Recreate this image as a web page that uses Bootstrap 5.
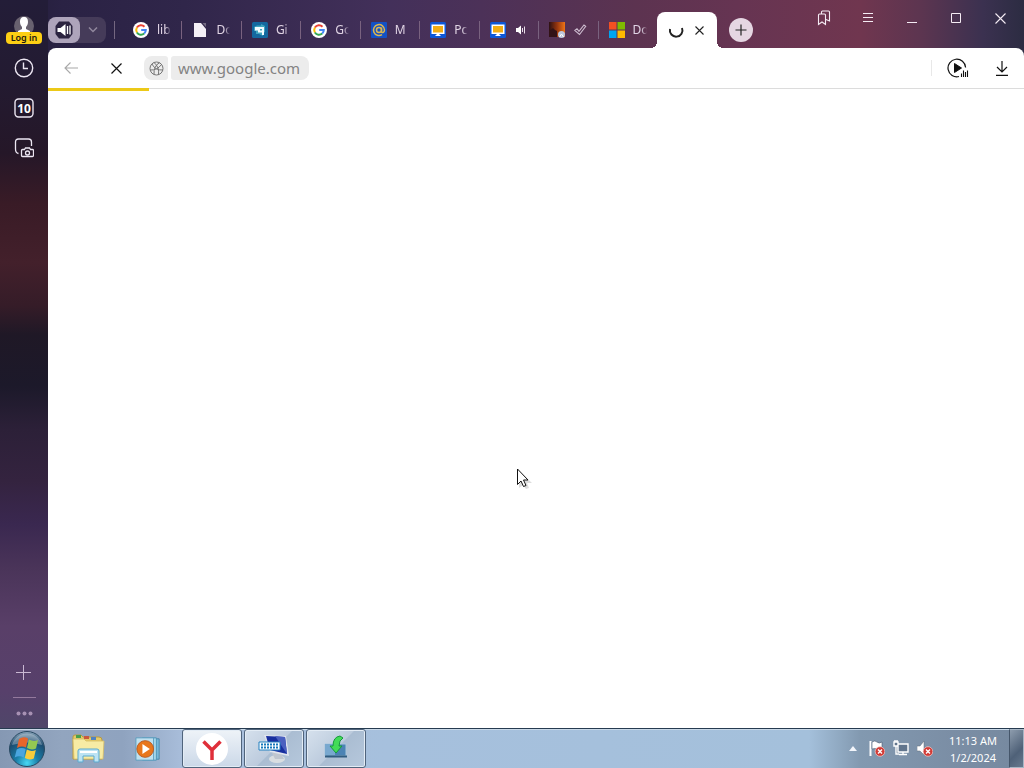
<!DOCTYPE html>
<html lang="en">
<head>
<meta charset="utf-8">
<meta name="viewport" content="width=device-width, initial-scale=1">
<title>www.google.com</title>
<link href="https://cdn.jsdelivr.net/npm/bootstrap@5.3.0/dist/css/bootstrap.min.css" rel="stylesheet">
<style>
  body { font-family: "Noto Sans", "Open Sans", sans-serif; font-size: 12px; line-height: 16px; background: #231c35; }
  svg { display: block; flex: none; }
  button { border: 0; padding: 0; background: none; color: inherit; display: flex; align-items: center; justify-content: center; }
  .browser { background: linear-gradient(90deg, #221c36 0, #2a2244 6%, #30264a 18%, #43305a 38%, #4c3158 47%, #5c3350 62%, #663452 72%, #70364f 84%, #5c3550 90%, #3b3150 96%, #2c2c42 100%); }
  .sidebar { width: 48px; color: #ece6f2; background: linear-gradient(180deg, #231d38 0, #231b32 10%, #251728 21%, #391b26 28%, #43202b 36%, #351c28 42%, #1f1826 46%, #1c192a 53%, #2c2038 59%, #34233f 66%, #3a2850 72%, #4a3459 78%, #593f68 86%, #57406b 95%, #4f4669 100%); }
  .sidebar button { width: 48px; height: 40px; }
  .avatar-btn { padding-top: 14px; }
  .login-tag { background: #fdcf14; color: #1c1a10; font-size: 9px; font-weight: 600; line-height: 12px; height: 12px; border-radius: 4px; width: 36px; margin-top: -4px; position: relative; }
  .side-foot { color: #a791b3; }
  .side-foot .rule { width: 23px; height: 1px; background: #94799d; }
  .side-foot .dots { height: 30px; }
  .strip { height: 48px; }
  .audio { width: 58px; height: 26px; margin-top: 17px; background: #453b59; border-radius: 8px; }
  .audio .on { width: 32px; height: 26px; background: #aea4bb; border-radius: 8px; }
  .audio .more { width: 26px; height: 26px; }
  .tick { width: 1px; height: 18px; background: #746780; margin-top: 21px; }
  .tabset { width: 535px; margin-left: 7px; padding-top: 12px; }
  .tab { flex: 1 1 0; min-width: 0; height: 36px; padding-left: 11px; color: #e0d4e4; position: relative; justify-content: flex-start; }
  .tab + .tab::before { content: ""; position: absolute; left: 0; top: 9px; width: 1px; height: 18px; background: #79627f; }
  .tab .cap { margin-left: 8px; width: 14px; overflow: hidden; white-space: nowrap; text-align: left; -webkit-mask-image: linear-gradient(90deg, #000 60%, transparent); mask-image: linear-gradient(90deg, #000 60%, transparent); }
  .tab svg + svg { margin-left: 9px; }
  .active-tab { width: 60px; height: 36px; margin-top: 12px; background: #fff; border-radius: 8px 8px 0 0; position: relative; color: #222; }
  .active-tab::before, .active-tab::after { content: ""; position: absolute; bottom: 0; width: 6px; height: 6px; }
  .active-tab::before { right: 100%; background: radial-gradient(circle at 0 0, transparent 6px, #fff 6px); }
  .active-tab::after { left: 100%; background: radial-gradient(circle at 100% 0, transparent 6px, #fff 6px); }
  .new-tab { width: 24px; height: 24px; border-radius: 50%; background: #e5d6e2; color: #222; margin: 18px 0 0 12px; }
  .win-tools { padding-right: 2px; color: #f5ecf4; }
  .win-tools button { width: 44px; height: 36px; }
  .page { background: #fff; border-radius: 8px 8px 0 0; }
  .toolbar { height: 41px; border-bottom: 1px solid #dcdcdc; position: relative; color: #111; }
  .tool { width: 44px; height: 40px; }
  .tool.back { width: 46px; color: #a8a8a8; }
  .site-info { width: 24px; height: 24px; background: #ececec; border-radius: 8px 3px 3px 8px; color: #777; margin-left: 6px; }
  .address { width: 138px; height: 24px; border: 0; border-radius: 3px 8px 8px 3px; background: #ececec; padding: 0 7px; margin-left: 3px; font-size: 15px; line-height: 24px; color: #838383; outline: 0; }
  .vline { width: 1px; height: 16px; background: #e8e8e8; }
  .loading { position: absolute; left: 0; top: 40px; width: 101px; height: 3px; background: #ecc918; }
  .pointer { position: absolute; left: 51%; top: 468px; margin-left: -6px; }
  .taskbar { height: 40px; border-top: 1px solid #263b50; box-shadow: inset 0 1px #c9d9e8; background: linear-gradient(90deg, #8598b3 0, #92a5bf 6%, #8fa3bf 12%, #a9bedb 18%, #a6c0dd 38%, #a4c0db 79%, #8299b0 84%, #7b8ea5 93%, #76899f 100%); }
  .start { width: 54px; }
  .pin { width: 60px; }
  .tasks { gap: 2px; margin-left: 4px; }
  .task { width: 60px; height: 39px; border: 1px solid #50647c; border-radius: 3px; box-shadow: inset 0 0 0 1px #e3ecf5; background: linear-gradient(135deg, #d6e1ed 0, #bccbdd 50%, #aabdd2 51%, #b6c8dc 100%); }
  .task.current { background: linear-gradient(180deg, #eef3f8, #cbd8e8); }
  .tray { margin-left: 12px; margin-right: 4px; }
  .time { width: 72px; color: #fff; font-size: 11px; line-height: 17px; }
  .show-desk { width: 15px; height: 39px; border: 1px solid #a7b6c5; border-left-color: #45566a; background: linear-gradient(135deg, #8d9cad, #4f6178 60%, #67798e); }
</style>
</head>
<body>
<div class="d-flex flex-column vh-100 overflow-hidden">
  <div class="browser d-flex flex-grow-1">
    <aside class="sidebar d-flex flex-column flex-shrink-0" aria-label="Side panel">
      <a href="#" class="avatar-btn d-flex flex-column align-items-center text-decoration-none">
        <svg width="20" height="22" viewBox="0 0 20 22"><circle cx="10" cy="12" r="10" fill="#68616f"/><path d="M10 3c3 0 4 2 4 5 0 2-1 4-2 5v2l4 2v3H4v-3l4-2v-2c-1-1-2-3-2-5 0-3 1-5 4-5z" fill="#fff"/></svg>
        <span class="login-tag text-center">Log in</span>
      </a>
      <button class="mt-1" aria-label="History"><svg width="20" height="20" viewBox="0 0 20 20" fill="none" stroke="currentColor" stroke-width="1.4"><circle cx="10" cy="10" r="8.7"/><path d="M9.500 4.500V10.500H14"/></svg></button>
      <button aria-label="Open tabs"><svg width="20" height="20" viewBox="0 0 20 20"><rect x="1" y="1" width="18" height="18" rx="3.500" fill="none" stroke="currentColor" stroke-width="1.400"/><text x="10" y="14.500" text-anchor="middle" font-family="Noto Sans" font-size="12" font-weight="700" fill="#fff">10</text></svg></button>
      <button aria-label="Screenshot"><svg width="20" height="20" viewBox="0 0 20 20" fill="none" stroke="currentColor" stroke-width="1.300"><path d="M4.500 15.500C2 15 1.500 13 1.500 11V4Q1.500 1 4.500 1h10q3 0 3 3v4"/><path d="M8.500 11.500h2l1-1.500h4l1 1.500h2q1 0 1 1v5q0 1-1 1h-10q-1 0-1-1v-5q0-1 1-1z"/><circle cx="13.500" cy="15" r="2"/></svg></button>
      <div class="side-foot mt-auto d-flex flex-column align-items-center">
        <button aria-label="Add"><svg width="16" height="16" viewBox="0 0 16 16" stroke="#c9b8d2"><path d="M7.500 0v15M0 7.500h15"/></svg></button>
        <div class="rule mt-1"></div>
        <button class="dots" aria-label="More"><svg width="17" height="5" viewBox="0 0 17 5" fill="currentColor"><circle cx="2.500" cy="2.500" r="2"/><circle cx="8.500" cy="2.500" r="2"/><circle cx="14.500" cy="2.500" r="2"/></svg></button>
      </div>
    </aside>

    <div class="d-flex flex-column flex-grow-1" style="min-width:0">
      <div class="strip d-flex align-items-start">
        <div class="audio d-flex flex-shrink-0">
          <button class="on" aria-label="Mute"><svg width="20" height="20" viewBox="0 0 20 20"><path d="M5 1.500h10L18.500 6v8L15 18.500H5L1.500 14V6z" fill="#2b2340"/><path d="M3.500 8h3l5-4v12l-5-4h-3z" fill="#fff"/><path d="M13.500 6v8M16 5.500v9" stroke="#fff" stroke-width="1.300"/></svg></button>
          <button class="more" aria-label="Playing tabs"><svg width="10" height="6" viewBox="0 0 10 6" fill="none" stroke="#91889d" stroke-width="1.500"><path d="M1 .5l4 4 4-4"/></svg></button>
        </div>
        <div class="tick ms-2 flex-shrink-0"></div>
        <nav class="tabset d-flex" aria-label="Tabs">
          <button class="tab"><svg width="16" height="16" viewBox="0 0 16 16"><use href="#google"/></svg><span class="cap">lib</span></button>
          <button class="tab"><svg width="16" height="16" viewBox="0 0 16 16"><path d="M2 1h7l5 6v8H2z" fill="#f4f0f6"/><path d="M10.500 1H14v4z" fill="#746b82"/></svg><span class="cap">Do</span></button>
          <button class="tab"><svg width="16" height="16" viewBox="0 0 16 16"><rect width="16" height="16" rx="1.500" fill="#14689f"/><path d="M2 5l3-1.500h4V2l4 2v6l-2 1v3l-4-2H4V9H2z" fill="#3fa5bf"/><path d="M6 5h6v8h-2v-2.500H6v-2h4V7H8v1.500H3V5z" fill="#f3fbff"/></svg><span class="cap">Gi</span></button>
          <button class="tab"><svg width="16" height="16" viewBox="0 0 16 16"><use href="#google"/></svg><span class="cap">Go</span></button>
          <button class="tab"><svg width="16" height="16" viewBox="0 0 16 16"><rect width="16" height="16" rx="1" fill="#1351c4"/><g fill="none" stroke="#dcb650" stroke-width="1.500"><circle cx="8" cy="8" r="2.500"/><path d="M10.500 5.500V9q0 2 1.500 1.500T13.500 8A5.500 5.500 0 1 0 11 12.700"/></g></svg><span class="cap">M</span></button>
          <button class="tab"><svg width="16" height="16" viewBox="0 0 16 16"><use href="#screen"/></svg><span class="cap">Pc</span></button>
          <button class="tab" aria-label="Playing tab"><svg width="16" height="16" viewBox="0 0 16 16"><use href="#screen"/></svg><svg width="12" height="10" viewBox="0 0 12 10"><path d="M1 3h2l3-2.500v9L3 7H1z" fill="#fff"/><path d="M7.500 3v4M9.500 1.500v7" stroke="#eadfea"/></svg></button>
          <button class="tab" aria-label="Finished tab"><svg width="16" height="16" viewBox="0 0 16 16"><defs><linearGradient id="fire"><stop offset="0" stop-color="#2b1013"/><stop offset=".5" stop-color="#94350f"/><stop offset="1" stop-color="#ee7416"/></linearGradient></defs><path d="M0 0h16v15H0z" fill="url(#fire)"/><path d="M0 9l4-3 2 2 2 1v6H0z" fill="#321216"/><circle cx="12.500" cy="12.500" r="3.500" fill="#bdc8dc"/><path d="M10.500 15l2-3 2 3" stroke="#fff" fill="none"/></svg><svg width="13" height="12" viewBox="0 0 13 12" fill="none" stroke="#cdbccf" stroke-width="1.100"><path d="M.8 6.500L3 4.800l2 2.500L10 1l1.700 1.300L5.500 10.500z"/></svg></button>
          <button class="tab"><svg width="16" height="16" viewBox="0 0 16 16"><path d="M0 0h7.500v7.500H0z" fill="#f25022"/><path d="M8.500 0H16v7.500H8.500z" fill="#7fba00"/><path d="M0 8.500h7.500V16H0z" fill="#00a4ef"/><path d="M8.500 8.500H16V16H8.500z" fill="#ffb900"/></svg><span class="cap">Do</span></button>
        </nav>
        <div class="active-tab d-flex align-items-center flex-shrink-0">
          <svg class="ms-2" width="22" height="16" viewBox="0 0 22 16" fill="none" stroke="#222" stroke-width="2"><path d="M5 7A6.300 6.300 0 1 0 17 6"/></svg>
          <button class="ms-2" aria-label="Close tab"><svg width="9" height="9" viewBox="0 0 9 9" stroke="currentColor" stroke-width="1.100"><path d="M.5.5l8 8M8.500.5l-8 8"/></svg></button>
        </div>
        <button class="new-tab flex-shrink-0" aria-label="New tab"><svg width="12" height="12" viewBox="0 0 12 12" stroke="currentColor" stroke-width="1.200"><path d="M6 .5v11M.5 6h11"/></svg></button>
        <div class="win-tools d-flex ms-auto flex-shrink-0">
          <button aria-label="Bookmarks"><svg width="14" height="16" viewBox="0 0 14 16" fill="none" stroke="currentColor" stroke-width="1.100"><path d="M1.500 5q0-1 1-1h5q1 0 1 1v9.500L5 12l-3.500 2.500z"/><path d="M4.500 4V2q0-1 1-1h6q1 0 1 1v9L9 9.500"/></svg></button>
          <button aria-label="Menu"><svg width="10" height="10" viewBox="0 0 10 10" stroke="currentColor"><path d="M0 .5h10M0 4.500h10M0 8.500h10"/></svg></button>
          <button aria-label="Minimize"><svg width="10" height="10" viewBox="0 0 10 10" stroke="currentColor"><path d="M0 9.500h10"/></svg></button>
          <button aria-label="Maximize"><svg width="10" height="10" viewBox="0 0 10 10" stroke="currentColor" fill="none"><path d="M.5.5h9v9h-9z"/></svg></button>
          <button aria-label="Close window"><svg width="11" height="11" viewBox="0 0 11 11" stroke="currentColor" stroke-width="1.100"><path d="M.5.5l10 10M10.500.5l-10 10"/></svg></button>
        </div>
      </div>

      <div class="page flex-grow-1">
        <div class="toolbar d-flex align-items-center">
          <button class="tool back" aria-label="Back"><svg width="14" height="12" viewBox="0 0 14 12" fill="none" stroke="currentColor" stroke-width="1.100"><path d="M14 6H1M6.500.5L1 6l5.500 5.500"/></svg></button>
          <button class="tool" aria-label="Stop loading"><svg width="11" height="11" viewBox="0 0 11 11" stroke="currentColor" stroke-width="1.200"><path d="M.5.5l10 10M10.500.5l-10 10"/></svg></button>
          <button class="site-info" aria-label="Site information"><svg width="15" height="15" viewBox="0 0 15 15" fill="none" stroke="currentColor"><circle cx="7.500" cy="7.500" r="6.500"/><path d="M1.200 9Q8 9.500 12.500 3.500M3 3q3 6.500 11 6M10.500 1.700Q4.500 5 5 13.500M5 1.500q5.500 4.500 4.500 12.300"/></svg></button>
          <input class="address" type="text" value="www.google.com" aria-label="Address">
          <div class="vline ms-auto"></div>
          <button class="tool ms-1" aria-label="Play media"><svg width="22" height="20" viewBox="0 0 22 20"><path d="M12 18.500A8.800 8.800 0 1 1 18.600 9.500" fill="none" stroke="currentColor" stroke-width="1.200"/><path d="M7.500 5.500v9l7-4.500z" fill="currentColor" stroke="currentColor"/><path d="M14.500 15.500V19M16.500 12.500V19M18.500 14V19M20.500 12.500V19" stroke="currentColor" stroke-width="1.100"/></svg></button>
          <button class="tool" aria-label="Downloads"><svg width="12" height="15" viewBox="0 0 12 15" fill="none" stroke="currentColor" stroke-width="1.200"><path d="M6 0v11M1 6l5 5 5-5M0 14.400h12"/></svg></button>
          <div class="loading"></div>
        </div>
      </div>
    </div>
  </div>

  <footer class="taskbar d-flex align-items-center flex-shrink-0">
    <button class="start" aria-label="Start"><svg width="38" height="38" viewBox="0 0 38 38"><defs><radialGradient id="orb" cx=".5" cy=".9" r=".9"><stop offset="0" stop-color="#48d8f4"/><stop offset=".35" stop-color="#1a7fa9"/><stop offset=".75" stop-color="#1c4c70"/><stop offset="1" stop-color="#8fa9bd"/></radialGradient></defs><circle cx="19" cy="19" r="17.500" fill="url(#orb)" stroke="#284962"/><path d="M4 15a15.500 15.500 0 0 1 30 0q-14-5-30 0z" fill="#fff" opacity=".3"/><path d="M11 9q4.500-3 9-.5l-2 9q-4.500-2-9 .5z" fill="#e8652b"/><path d="M21 9.500q4.500 2.500 9 .5l-2 8.500q-4.500 2-9-.5z" fill="#94c952"/><path d="M8.700 19.500q4.500-2.500 9-.5l-2 8.500q-4.500-2.500-9 0z" fill="#4aa5df"/><path d="M18.800 19.500q4.500 2.500 9 .5l-2 8.500q-4.500 2-9-.5z" fill="#f8cc3c"/></svg></button>
    <button class="pin ms-1" aria-label="Windows Explorer"><svg width="34" height="30" viewBox="0 0 34 30"><path d="M2 3Q2 1 4 1h6l2 2h16q3 0 3 3v19H2z" fill="#e5ca68" stroke="#b89a40"/><path d="M5 1h5v3H5z" fill="#48a04b"/><path d="M13 2h5v3h-5z" fill="#c9593d"/><path d="M20 3h5v3h-5z" fill="#4f82c2"/><path d="M2 5h11l2 2h18l-1 18H3z" fill="#f7eba4" stroke="#d5bd64" stroke-width=".8"/><path d="M7 17q0-2 2-2h17q2 0 2 2v11h-5v-6H12v6H7z" fill="#bce3f3" stroke="#5aa9cf"/><path d="M9 18h17" stroke="#fff" stroke-width="2"/></svg></button>
    <button class="pin" aria-label="Media Player"><svg width="26" height="26" viewBox="1 1 28 26"><path d="M12 3h15v22H12z" fill="#78b8d8" stroke="#4888aa"/><path d="M9 2h15v24H9z" fill="#a9d9ec" stroke="#4d93b6"/><path d="M2 2h19v24H2z" fill="#c0e1ef" stroke="#5b9dbe"/><circle cx="12" cy="14" r="9" fill="#e8771d" stroke="#b75a24"/><path d="M9 8.500v11l8-5.500z" fill="#fff"/></svg></button>
    <div class="tasks d-flex">
      <button class="task current" aria-label="Yandex Browser"><svg width="32" height="32" viewBox="0 0 32 32"><circle cx="16" cy="16" r="16" fill="#fff"/><path d="M7.500 8.500L16 17l8.500-8.500M16 16.500V27" fill="none" stroke="#df2f3a" stroke-width="3.500"/></svg></button>
      <button class="task" aria-label="On-Screen Keyboard"><svg width="32" height="32" viewBox="0 0 32 32"><ellipse cx="19" cy="26" rx="8" ry="4" fill="#d9dee1"/><path d="M14 20l8-1 4 7h-9z" fill="#bfc6cf"/><path d="M6 2l22 1 3 20-19-4z" fill="#e1e5ee"/><path d="M8 3l19 1 2 17-17-4z" fill="#182f9f"/><path d="M17 3l10 1 2 17z" fill="#4a60c0"/><path d="M1 9h21v8H1z" fill="#fff" stroke="#2280c0"/><path d="M3 11.500h18M3 14.500h18" stroke="#1679bb" stroke-width="1.800" stroke-dasharray="2 1"/></svg></button>
      <button class="task" aria-label="Installer"><svg width="28" height="28" viewBox="0 0 28 28"><path d="M3 9h21v12H3z" fill="#4b83b4" stroke="#a9c6dc"/><path d="M3 9h10v11H3z" fill="#78a8cf"/><path d="M3 21.500h22" stroke="#315c80" stroke-width="2"/><path d="M18 1q-7 1-7 10H8l6 7 6-7h-3q0-6 4-8z" fill="#42dc57" stroke="#15993c"/></svg></button>
    </div>
    <div class="d-flex align-items-center ms-auto">
      <button aria-label="Show hidden icons"><svg width="8" height="5" viewBox="0 0 8 5"><path d="M4 0l4 5H0z" fill="#f3f6fb"/></svg></button>
      <div class="tray d-flex gap-2">
        <svg width="16" height="17" viewBox="0 0 16 17"><path d="M1.500 1v15" stroke="#fff" stroke-width="2"/><path d="M3 2q3-2 5 0t5 0v7q-3 1-5 0t-5 0z" fill="#fff" stroke="#46586f" stroke-width=".6"/><use href="#stop"/></svg>
        <svg width="16" height="17" viewBox="0 0 16 17" fill="#61758d" stroke="#fff" stroke-width="1.400"><path d="M5 4h10v8H5zM10 12v2M6 14.500h8M1 2h4v4H1zM3 6v8h3M2 0v2M4 0v2"/></svg>
        <svg width="16" height="17" viewBox="0 0 16 17"><path d="M0 6h3l4-5v14l-4-4H0z" fill="#fff" stroke="#5d6876" stroke-width=".5"/><use href="#stop"/></svg>
      </div>
      <div class="time text-center">11:13 AM<br>1/2/2024</div>
      <button class="show-desk" aria-label="Show desktop"></button>
    </div>
  </footer>
</div>

<svg class="pointer" width="16" height="22" viewBox="0 0 16 22"><path d="M3 3v17l4-3 3 4 3-1-2-5h5z" fill="#777" opacity=".25"/><path d="M1.500 1v15.500L5 13l2.500 5.500 2.500-1L7.500 12H12z" fill="#fff" stroke="#111"/></svg>

<svg width="0" height="0" class="position-absolute" aria-hidden="true">
  <symbol id="google" viewBox="0 0 16 16"><circle cx="8" cy="8" r="8" fill="#fff"/><g fill="none" stroke-width="2"><path d="M11.500 4.700A4.800 4.800 0 0 0 3.900 5.600" stroke="#ea4335"/><path d="M3.900 5.600a4.800 4.800 0 0 0 0 4.800" stroke="#fbbc05"/><path d="M3.900 10.400a4.800 4.800 0 0 0 7.300 1.100" stroke="#34a853"/><path d="M11.200 11.500A4.800 4.800 0 0 0 12.800 8H8.200" stroke="#4285f4"/></g></symbol>
  <symbol id="screen" viewBox="0 0 16 16"><rect width="16" height="16" rx="1.500" fill="#0d57d6"/><path d="M1.500 2.500h13v9.500h-5v1h1v1h-5v-1h1v-1h-5z" fill="#fff"/><path d="M3 4h10v6.500H3z" fill="#f2ad14"/></symbol>
  <symbol id="stop" viewBox="0 0 16 17"><circle cx="11" cy="11.500" r="4.800" fill="#d23a35" stroke="#f4d0cd" stroke-width=".7"/><path d="M9 9.500l4 4M13 9.500l-4 4" stroke="#fff" stroke-width="1.400"/></symbol>
</svg>
<script src="https://cdn.jsdelivr.net/npm/bootstrap@5.3.0/dist/js/bootstrap.bundle.min.js"></script>
</body>
</html>
